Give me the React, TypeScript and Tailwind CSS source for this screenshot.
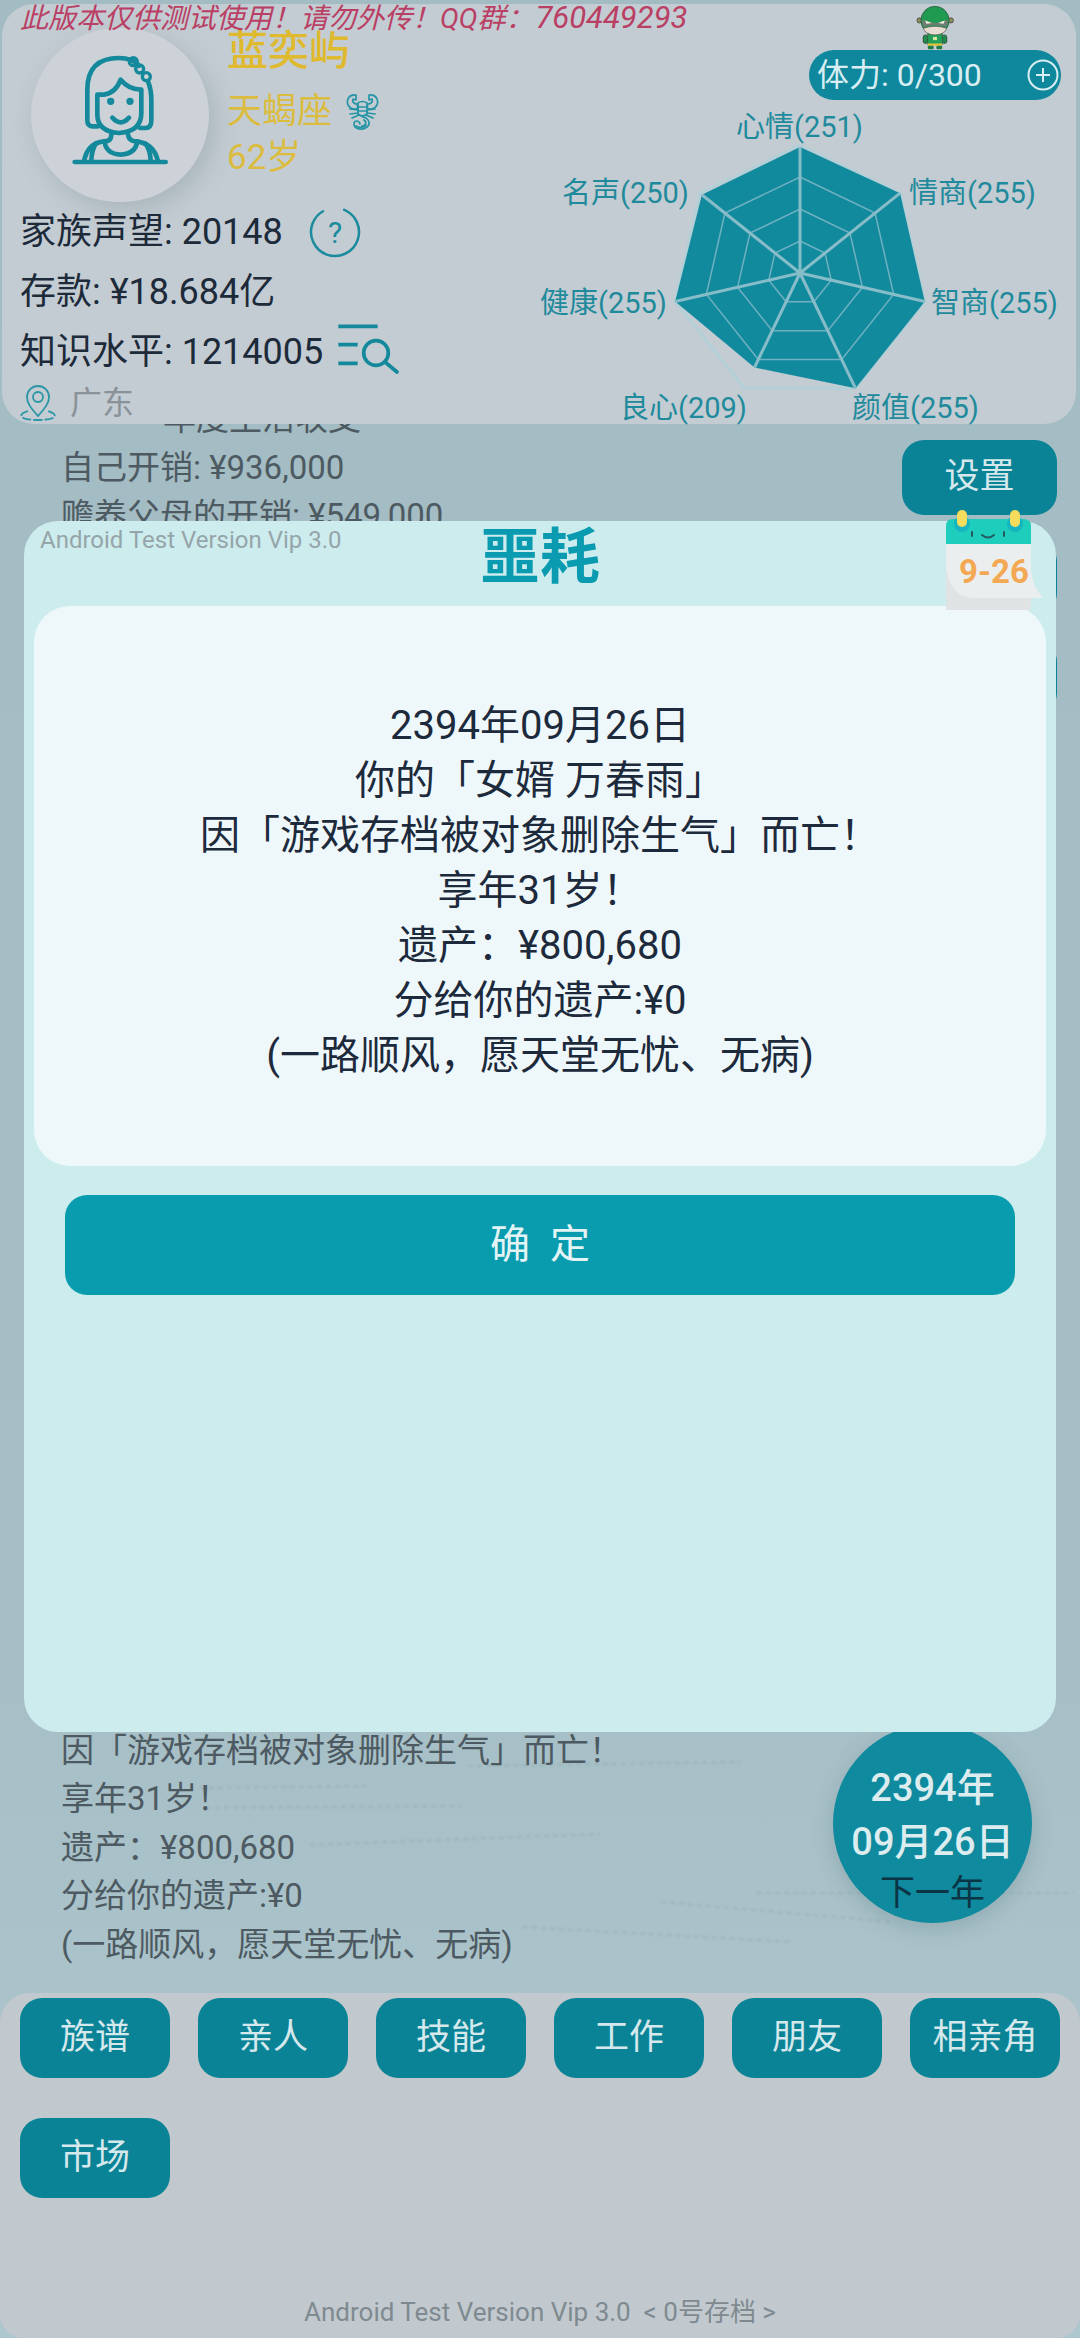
import React from 'react';

const font = { fontFamily: '"Roboto", "Noto Sans CJK SC", sans-serif' };

const NAV = ['族谱', '亲人', '技能', '工作', '朋友', '相亲角', '市场'];

const RADAR_LABELS = [
  { text: '心情(251)', pos: 'left-[216px] top-[101px]' },
  { text: '情商(255)', pos: 'left-[389px] top-[167px]' },
  { text: '智商(255)', pos: 'left-[411px] top-[277px]' },
  { text: '颜值(255)', pos: 'left-[332px] top-[382px]' },
  { text: '良心(209)', pos: 'left-[100px] top-[382px]' },
  { text: '健康(255)', pos: 'left-[20px] top-[277px]' },
  { text: '名声(250)', pos: 'left-[42px] top-[167px]' },
];

const MESSAGE = [
  '2394年09月26日',
  '你的「女婿 万春雨」',
  '因「游戏存档被对象删除生气」而亡！',
  '享年31岁！',
  '遗产：¥800,680',
  '分给你的遗产:¥0',
  '(一路顺风，愿天堂无忧、无病)',
];

// radar centre in svg coords, seven axes clockwise from the top
const CX = 140;
const CY = 138;
const R = 128;
const VALUES = [251, 255, 255, 255, 209, 255, 250];
const vertex = (i: number, scale: number) => {
  const a = (i * 2 * Math.PI) / 7 - Math.PI / 2;
  return [CX + Math.cos(a) * R * scale, CY + Math.sin(a) * R * scale];
};
const ring = (scale: number) =>
  VALUES.map((_, i) => vertex(i, scale).map((n) => n.toFixed(1)).join(',')).join(' ');

const Radar = () => (
  <svg width="280" height="276" viewBox="0 0 280 276" fill="none">
    <polygon points={ring(1)} stroke="#b3cfd7" strokeWidth="3" />
    <polygon
      points={VALUES.map((v, i) => vertex(i, v / 255).join(',')).join(' ')}
      fill="#128a9e"
    />
    {[0.75, 0.5, 0.25].map((s) => (
      <polygon key={s} points={ring(s)} stroke="#6fb1c0" strokeWidth="1.5" />
    ))}
    {VALUES.map((v, i) => {
      const [x, y] = vertex(i, v / 255);
      return <line key={i} x1={CX} y1={CY} x2={x} y2={y} stroke="#86bdc9" strokeWidth="3" />;
    })}
  </svg>
);

const GirlIcon = () => (
  <svg width="178" height="174" viewBox="90 85 516 522" fill="none" stroke="#14899c" strokeWidth="14" strokeLinecap="round" strokeLinejoin="round">
    <path d="M282 380H265Q250 380 250 362V270Q250 175 345 175Q385 175 405 198" />
    <path d="M432 245Q442 270 442 300V362Q442 385 425 385H408" />
    <path d="M280 345V285H300Q335 280 350 240Q375 270 412 270V340Q412 395 346 400Q280 395 280 345Z" />
    <circle cx="320" cy="305" r="4" fill="#14899c" />
    <circle cx="378" cy="305" r="4" fill="#14899c" />
    <path d="M325 354Q350 382 375 354" />
    <path d="M322 405Q322 425 300 425Q250 430 240 485" />
    <path d="M372 405Q375 425 395 425Q450 430 462 485" />
    <path d="M302 425Q305 462 350 465Q395 462 400 425" />
    <path d="M275 432Q262 455 262 485M425 432Q440 455 440 485" />
    <path d="M212 487H485" />
    <circle cx="388" cy="186" r="12" strokeWidth="10" />
    <circle cx="407" cy="208" r="12" strokeWidth="10" />
    <circle cx="427" cy="231" r="12" strokeWidth="10" />
  </svg>
);

const ScorpionIcon = () => (
  <svg width="33" height="38" viewBox="0 0 33 38" fill="none" stroke="#2595a6" strokeWidth="1.7" strokeLinecap="round" strokeLinejoin="round">
    <path d="M10 2C3 1 0 7 2 12C4 16 9 17 12 15L11 11C8 11 6 9 7 6L10 7Z" />
    <path d="M23 2C30 1 33 7 31 12C29 16 24 17 21 15L22 11C25 11 27 9 26 6L23 7Z" />
    <path d="M12 10Q16.5 7 21 10L21 21Q16.5 25 12 21Z" />
    <path d="M12 14H21M12 18H21M4 16L12 17M29 16L21 17M4 21L12 20M29 21L21 20M6 25L13 22M27 25L20 22" />
    <path d="M16.5 24C23 25 25 31 21 34C16 38 8 36 8 31C8 27 13 27 14 31" />
    <path d="M18 27C21 29 20 33 16 33M10 33C13 35 18 35 20 32" />
  </svg>
);

const HelpIcon = () => (
  <svg width="52" height="52" viewBox="0 0 52 52" fill="none" className="ml-[26px]">
    <circle cx="26" cy="26" r="24" stroke="#1b8b9d" strokeWidth="2.5" strokeDasharray="130 21" transform="rotate(-70 26 26)" />
    <text x="26" y="37" textAnchor="middle" fontSize="30" fill="#1b8b9d" style={font}>?</text>
  </svg>
);

const SearchListIcon = () => (
  <svg width="62" height="52" viewBox="978 975 186 156" fill="none" stroke="#14899c" strokeWidth="11" className="ml-[14px] -mt-[7px]">
    <path d="M982 985H1100M982 1040H1040M982 1096H1040" />
    <circle cx="1095" cy="1065" r="37" />
    <path d="M1122 1092L1158 1122" strokeLinecap="round" />
  </svg>
);

const PinIcon = () => (
  <svg width="38" height="38" viewBox="0 0 38 38" fill="none" stroke="#2a95a5" strokeWidth="1.8">
    <path d="M19 32C13 25 8 20 8 13A11 11 0 0 1 30 13C30 20 25 25 19 32Z" />
    <circle cx="19" cy="13" r="5" />
    <path d="M9 27C3 29 1 31 3 33C6 37 32 37 35 33C37 31 35 29 29 27" strokeDasharray="9 2" />
  </svg>
);

const Hero = () => (
  <svg width="40" height="46" viewBox="45 10 120 140" className="absolute left-[914px] top-0">
    <circle cx="55" cy="60" r="8" fill="#8b8f5e" stroke="#333" strokeWidth="2" />
    <circle cx="150" cy="60" r="8" fill="#8b8f5e" stroke="#333" strokeWidth="2" />
    <rect x="66" y="104" width="14" height="26" rx="7" fill="#1f8a4a" stroke="#333" strokeWidth="2" />
    <rect x="124" y="104" width="14" height="26" rx="7" fill="#1f8a4a" stroke="#333" strokeWidth="2" />
    <rect x="80" y="100" width="44" height="34" fill="#25a05a" stroke="#2c5a3a" strokeWidth="2" />
    <rect x="96" y="110" width="12" height="10" fill="#d8e8a0" />
    <rect x="80" y="130" width="44" height="7" fill="#e3c23a" />
    <rect x="80" y="137" width="18" height="11" rx="4" fill="#1f7d45" />
    <rect x="106" y="137" width="18" height="11" rx="4" fill="#1f7d45" />
    <circle cx="102" cy="60" r="43" fill="#1f9a50" stroke="#2c4a3a" strokeWidth="2" />
    <path d="M66 84Q102 72 138 84Q130 104 102 104Q74 104 66 84Z" fill="#e8dcd2" stroke="#333" strokeWidth="1.5" />
    <path d="M62 58L100 68H106L142 58L138 80Q102 70 66 80Z" fill="#6f7d74" />
    <path d="M72 60L92 68L76 70ZM132 60L112 68L128 70Z" fill="#f4f4e4" />
  </svg>
);

const CalendarIcon = () => (
  <div className="absolute left-[921px] -top-[11px] w-[100px] h-[106px]">
    <svg width="100" height="106" viewBox="0 0 100 106">
      <path d="M1 34H86V100H1Z" fill="#dfe3e4" />
      <path d="M1 34H86V60Q87 76 98 88H28Q6 88 1 58Z" fill="#ebeeef" />
      <path d="M1 16Q1 9 8 9H78Q86 9 86 16V34H1Z" fill="#1fcdbc" />
      <circle cx="17" cy="14" r="8" fill="#14b4c0" />
      <circle cx="70" cy="14" r="8" fill="#14b4c0" />
      <rect x="12" y="0" width="10" height="17" rx="5" fill="#f5dc5c" />
      <rect x="65" y="0" width="10" height="17" rx="5" fill="#f5dc5c" />
      <path d="M27 22V26M59 22V26" stroke="#245a5e" strokeWidth="2" strokeLinecap="round" />
      <path d="M37 25Q43 30 49 25" stroke="#245a5e" strokeWidth="2" fill="none" strokeLinecap="round" />
    </svg>
    <span className="absolute left-[13px] top-[40px] w-[72px] text-center text-[33px] leading-[44px] font-bold text-[#f3a954]">9-26</span>
  </div>
);

const PlusIcon = () => (
  <svg width="32" height="32" viewBox="0 0 32 32" fill="none" stroke="#d9eef2" strokeWidth="2" className="absolute right-[2px] top-[9px]">
    <circle cx="16" cy="16" r="14.5" />
    <path d="M16 9V23M9 16H23" />
  </svg>
);

// blurred remains of older log lines in the backdrop
const Streaks = () => (
  <svg width="1080" height="270" viewBox="0 0 1080 270" fill="none" stroke="#7f959c" strokeWidth="2.5" strokeDasharray="5 4" className="absolute left-0 top-[1730px] opacity-25 blur-[1px]">
    <path d="M468 36L740 32M200 58L370 56M206 78L461 76M310 115L600 104" />
    <path d="M757 163L1074 163M661 172L895 192M523 197L792 212" />
  </svg>
);

const App: React.FC = () => {
  return (
    <div
      className="relative w-[1080px] h-[2338px] overflow-hidden flex flex-col pt-[4px] bg-gradient-to-b from-[#a3bbc2] via-[#a6bec5] via-70% to-[#aec7ce]"
      style={font}
    >
      <Streaks />

      {/* Top status panel */}
      <div className="relative z-10 ml-[2px] mr-[4px] h-[420px] shrink-0 rounded-[32px] bg-[#c3ccd2] flex">
        <p className="absolute left-[18px] top-0 text-[28px] leading-[28px] italic text-[#b93f64] whitespace-nowrap">
          此版本仅供测试使用！请勿外传！QQ群：<span className="text-[31px] ml-[2px]">760449293</span>
        </p>
        <Hero />

        <div className="w-[518px] shrink-0 pl-[18px] pt-[24px] flex flex-col text-[#1c2a3a] text-[36px]">
          <div className="flex items-start pl-[11px]">
            <div className="w-[178px] h-[174px] rounded-full bg-[#cdd2d8] shadow-[6px_8px_24px_rgba(90,110,125,0.25)]">
              <GirlIcon />
            </div>
            <div className="ml-[18px] -mt-[4px] text-[#dcbc3e] text-[35px] leading-[46px]">
              <p className="text-[41px] leading-[48px] font-medium text-[#dfb92e] pt-[3px] -mb-[3px]">蓝奕屿</p>
              <div className="flex items-center mt-[17px]">
                <span>天蝎座</span>
                <span className="ml-[14px]"><ScorpionIcon /></span>
              </div>
              <p>62岁</p>
            </div>
          </div>
          <div className="flex items-center h-[60px] mt-0 whitespace-nowrap">
            <span>家族声望: 20148</span>
            <HelpIcon />
          </div>
          <div className="flex items-center h-[60px] whitespace-nowrap">存款: ¥18.684亿</div>
          <div className="flex items-center h-[60px] whitespace-nowrap">
            <span>知识水平: 1214005</span>
            <SearchListIcon />
          </div>
          <div className="flex items-center h-[42px] text-[#8a9198] text-[32px] -ml-[1px]">
            <PinIcon />
            <span className="ml-[13px]">广东</span>
          </div>
        </div>

        <div className="relative flex-1">
          <div className="absolute right-[15px] top-[46px] w-[252px] h-[50px] rounded-[25px] bg-[#0f889d] pl-[8px] text-[32px] leading-[50px] text-[#d9eef2]">
            体力: 0/300
            <PlusIcon />
          </div>
          <div className="absolute left-[140px] top-[131px]">
            <Radar />
          </div>
          {RADAR_LABELS.map((l) => (
            <span key={l.text} className={`absolute ${l.pos} text-[29px] leading-[44px] text-[#1f8a9c] whitespace-nowrap`}>
              {l.text}
            </span>
          ))}
        </div>
      </div>

      {/* Scrolling log behind the dialog */}
      <div className="relative flex-1 flex justify-between text-[33px] leading-[48.5px] text-[#4d5a62]">
        <div className="pl-[61px] pb-[24px] flex flex-col justify-between whitespace-nowrap">
          <div className="-mt-[29px]">
            <p className="pl-[102px]">年度生活收支</p>
            <p>自己开销: ¥936,000</p>
            <p>赡养父母的开销: ¥549,000</p>
          </div>
          <div>
            <p>因「游戏存档被对象删除生气」而亡！</p>
            <p>享年31岁！</p>
            <p>遗产：¥800,680</p>
            <p>分给你的遗产:¥0</p>
            <p>(一路顺风，愿天堂无忧、无病)</p>
          </div>
        </div>
        <div className="flex flex-col justify-between items-end pr-[23px] pt-[16px] pb-[70px]">
          <div className="flex flex-col gap-[25px]">
            <button className="w-[155px] h-[75px] rounded-[22px] bg-[#0a8397] text-[35px] text-[#d5e8ec]">设置</button>
            <div className="w-[155px] h-[75px] rounded-[22px] bg-[#0a8397]" />
            <div className="w-[155px] h-[75px] rounded-[22px] bg-[#0a8397]" />
          </div>
          <div className="w-[199px] h-[199px] mr-[25px] rounded-full bg-[#0f8a9e] flex flex-col items-center justify-end pb-[7px] shadow-[0_6px_20px_rgba(90,120,130,0.3)]">
            <p className="text-[38px] leading-[54px] font-medium text-[#dcecef]">2394年</p>
            <p className="text-[38px] leading-[54px] font-medium text-[#dcecef] mb-[3px]">09月26日</p>
            <p className="text-[35px] leading-[44px] text-[#0b3444]">下一年</p>
          </div>
        </div>
      </div>

      {/* Bottom nav */}
      <div className="relative h-[345px] shrink-0 rounded-t-[30px] rounded-b-[24px] bg-[#c1c9ce] pl-[20px] pt-[5px]">
        <div className="flex flex-wrap gap-x-[28px] gap-y-[40px]">
          {NAV.map((n) => (
            <button key={n} className="w-[150px] h-[80px] rounded-[22px] bg-[#0a8397] text-[35px] text-[#d5e8ec]">
              {n}
            </button>
          ))}
        </div>
        <p className="absolute left-0 right-0 bottom-[6px] text-center text-[26px] leading-[40px] text-[#7f8a90] whitespace-pre">
          {'Android Test Version Vip 3.0  < 0号存档 >'}
        </p>
      </div>

      {/* Death notice dialog */}
      <div className="absolute z-20 left-[24px] top-[521px] w-[1032px] h-[1211px] rounded-[34px] bg-[#cdecee] flex flex-col">
        <p className="absolute left-[16px] top-[2px] text-[24px] leading-[34px] text-[#95a5a9]">Android Test Version Vip 3.0</p>
        <CalendarIcon />
        <h2 className="h-[85px] text-center text-[60px] leading-[74px] font-bold text-[#0b9bb0]">噩耗</h2>
        <div className="mx-[10px] h-[560px] rounded-[36px] bg-[#eef8fa] pt-[92px] text-center text-[40px] leading-[55px] text-[#1d2a3c]">
          {MESSAGE.map((m) => (
            <p key={m}>{m}</p>
          ))}
        </div>
        <button className="mx-[41px] mt-[29px] h-[100px] rounded-[22px] bg-[#099cae] text-[40px] tracking-[0.5em] indent-[0.5em] text-[#e4f4f6]">
          确定
        </button>
      </div>
    </div>
  );
};

export default App;
